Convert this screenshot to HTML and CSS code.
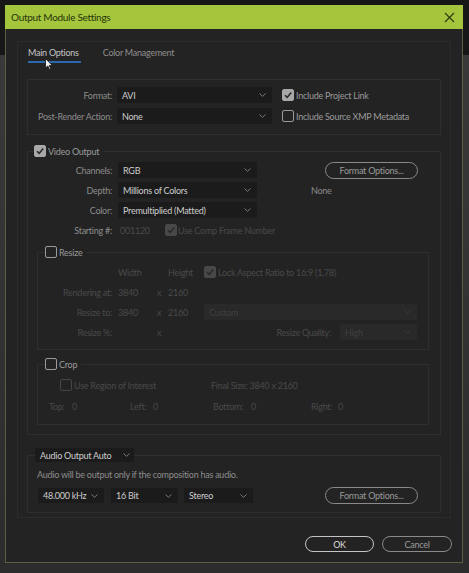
FILE: index.html
```html
<!DOCTYPE html>
<html lang="en">
<head>
    <meta charset="UTF-8">
    <title>Output Module Settings</title>
    <link rel="stylesheet" href="styles.css">
</head>
<body>
    <div class="window">
        <div class="titlebar">
            <span class="title">Output Module Settings</span>
            <svg class="close" width="11" height="11" viewBox="0 0 11 11"><path d="M1 1L10 10M10 1L1 10" stroke="#2f3d12" stroke-width="1.2"/></svg>
        </div>

        <div class="win-body">
            <div class="panel">
                <div class="tabs">
                    <span class="tab active">Main Options</span>
                    <span class="tab">Color Management</span>
                </div>

                <div class="group format-group">
                    <div class="format-row">
                        <span class="lbl">Format:</span>
                        <div class="select sel-format"><span>AVI</span><svg class="chev" width="7" height="4" viewBox="0 0 7 4"><path d="M0.5 0.5L3.5 3.3L6.5 0.5" fill="none" stroke="#7a7a7a"/></svg></div>
                        <span class="check on"><svg width="10" height="10" viewBox="0 0 10 10"><path d="M2 5.2L4.2 7.4L8.2 2.4" fill="none" stroke="#2a2a2a" stroke-width="1.6"/></svg></span>
                        <span class="check-text">Include Project Link</span>
                    </div>
                    <div class="format-row">
                        <span class="lbl">Post-Render Action:</span>
                        <div class="select sel-format"><span>None</span><svg class="chev" width="7" height="4" viewBox="0 0 7 4"><path d="M0.5 0.5L3.5 3.3L6.5 0.5" fill="none" stroke="#7a7a7a"/></svg></div>
                        <span class="check"></span>
                        <span class="check-text">Include Source XMP Metadata</span>
                    </div>
                </div>

                <fieldset class="video">
                    <legend class="legend"><span class="check on"><svg width="10" height="10" viewBox="0 0 10 10"><path d="M2 5.2L4.2 7.4L8.2 2.4" fill="none" stroke="#2a2a2a" stroke-width="1.6"/></svg></span><span class="check-text">Video Output</span></legend>

                    <div class="video-grid">
                        <span class="lbl">Channels:</span>
                        <div class="select"><span>RGB</span><svg class="chev" width="7" height="4" viewBox="0 0 7 4"><path d="M0.5 0.5L3.5 3.3L6.5 0.5" fill="none" stroke="#7a7a7a"/></svg></div>
                        <div><button class="pill fmt-btn">Format Options...</button></div>

                        <span class="lbl">Depth:</span>
                        <div class="select"><span>Millions of Colors</span><svg class="chev" width="7" height="4" viewBox="0 0 7 4"><path d="M0.5 0.5L3.5 3.3L6.5 0.5" fill="none" stroke="#7a7a7a"/></svg></div>
                        <span class="none-text">None</span>

                        <span class="lbl">Color:</span>
                        <div class="select"><span>Premultiplied (Matted)</span><svg class="chev" width="7" height="4" viewBox="0 0 7 4"><path d="M0.5 0.5L3.5 3.3L6.5 0.5" fill="none" stroke="#7a7a7a"/></svg></div>
                        <span></span>

                        <span class="lbl">Starting #:</span>
                        <div class="start-row">
                            <span class="dim start-num">001120</span>
                            <span class="check on dis"><svg width="10" height="10" viewBox="0 0 10 10"><path d="M2 5.2L4.2 7.4L8.2 2.4" fill="none" stroke="#2a2a2a" stroke-width="1.6"/></svg></span>
                            <span class="dim">Use Comp Frame Number</span>
                        </div>
                    </div>

                    <fieldset class="sub resize">
                        <legend class="legend"><span class="check"></span><span class="check-text">Resize</span></legend>
                        <div class="resize-grid">
                            <span></span><span class="dim">Width</span><span></span><span class="dim">Height</span>
                            <span class="lock"><span class="check on dis"><svg width="10" height="10" viewBox="0 0 10 10"><path d="M2 5.2L4.2 7.4L8.2 2.4" fill="none" stroke="#2a2a2a" stroke-width="1.6"/></svg></span><span class="dim">Lock Aspect Ratio to 16:9 (1.78)</span></span>

                            <span class="lbl dim">Rendering at:</span><span class="dim">3840</span><span class="dim">x</span><span class="dim">2160</span><span></span>

                            <span class="lbl dim">Resize to:</span><span class="dim">3840</span><span class="dim">x</span><span class="dim">2160</span>
                            <div class="select dis-sel"><span>Custom</span><svg class="chev" width="7" height="4" viewBox="0 0 7 4"><path d="M0.5 0.5L3.5 3.3L6.5 0.5" fill="none" stroke="#3c3c3c"/></svg></div>

                            <span class="lbl dim">Resize %:</span><span></span><span class="dim">x</span><span></span>
                            <div class="quality">
                                <span class="dim">Resize Quality:</span>
                                <div class="select dis-sel sel-quality"><span>High</span><svg class="chev" width="7" height="4" viewBox="0 0 7 4"><path d="M0.5 0.5L3.5 3.3L6.5 0.5" fill="none" stroke="#3c3c3c"/></svg></div>
                            </div>
                        </div>
                    </fieldset>

                    <fieldset class="sub crop">
                        <legend class="legend"><span class="check"></span><span class="check-text">Crop</span></legend>
                        <div class="roi-row">
                            <span class="roi"><span class="check dis-empty"></span><span class="dim">Use Region of Interest</span></span>
                            <span class="dim">Final Size: 3840 x 2160</span>
                        </div>
                        <div class="offset-row">
                            <span class="dim c-top">Top:</span><span class="dim c-val">0</span>
                            <span class="dim c-left">Left:</span><span class="dim c-val2">0</span>
                            <span class="dim c-bottom">Bottom:</span><span class="dim c-val2">0</span>
                            <span class="dim c-right">Right:</span><span class="dim">0</span>
                        </div>
                    </fieldset>
                </fieldset>

                <fieldset class="audio">
                    <legend class="legend audio-legend">
                        <div class="select sel-audio"><span>Audio Output Auto</span><svg class="chev" width="7" height="4" viewBox="0 0 7 4"><path d="M0.5 0.5L3.5 3.3L6.5 0.5" fill="none" stroke="#7a7a7a"/></svg></div>
                    </legend>
                    <div class="audio-note">Audio will be output only if the composition has audio.</div>
                    <div class="audio-row">
                        <div class="select sel-rate"><span>48.000 kHz</span><svg class="chev" width="7" height="4" viewBox="0 0 7 4"><path d="M0.5 0.5L3.5 3.3L6.5 0.5" fill="none" stroke="#7a7a7a"/></svg></div>
                        <div class="select sel-bit"><span>16 Bit</span><svg class="chev" width="7" height="4" viewBox="0 0 7 4"><path d="M0.5 0.5L3.5 3.3L6.5 0.5" fill="none" stroke="#7a7a7a"/></svg></div>
                        <div class="select sel-ch"><span>Stereo</span><svg class="chev" width="7" height="4" viewBox="0 0 7 4"><path d="M0.5 0.5L3.5 3.3L6.5 0.5" fill="none" stroke="#7a7a7a"/></svg></div>
                        <button class="pill fmt-btn audio-btn">Format Options...</button>
                    </div>
                </fieldset>
            </div>

            <div class="actions">
                <button class="pill ok-btn">OK</button>
                <button class="pill cancel-btn">Cancel</button>
            </div>
        </div>
    </div>

    <!-- mouse pointer over the first tab -->
    <svg class="cursor" width="8" height="12" viewBox="0 0 8 12"><path d="M0.5 0.5L0.5 10L2.8 8L4.5 11.5L5.8 10.9L4.2 7.5L7.3 7.5Z" fill="#f2f2f2" stroke="#111" stroke-width="0.8"/></svg>
</body>
</html>
```

FILE: styles.css
```css
  body {
      margin: 0;
      width: 469px;
      height: 573px;
      overflow: hidden;
      font-family: Lato, "Open Sans", sans-serif;
      font-size: 9px;
      letter-spacing: -0.25px;
      color: #8c8c8c;
      background: linear-gradient(to bottom, #171717 0, #171717 55px, #393939 55px, #2c2c2c 100%);
      position: relative;
  }
  .window {
      margin: 5px 0 0 5px;
      width: 458px;
  }
  .titlebar {
      height: 24px;
      background-color: #a5c53c;
      display: flex;
      align-items: center;
      justify-content: space-between;
      padding: 0 8px 0 6px;
  }
  .title {
      font-size: 10px;
      letter-spacing: -0.3px;
      color: #27340c;
  }
  .close {
      display: block;
  }
  .win-body {
      height: 534px;
      box-sizing: border-box;
      background-color: #232323;
      border: 1px solid #5d5d44;
      border-top: none;
      padding: 12px 10px 0 11px;
  }
  .panel {
      width: 434px;
      box-sizing: border-box;
      border: 1px solid #2c2c2c;
      padding: 0 9px 4px 9px;
  }

  /* tabs */
  .tabs {
      display: flex;
      gap: 22px;
      padding: 5px 0 0 1px;
  }
  .tab {
      line-height: 12px;
      padding-bottom: 2px;
      border-bottom: 2px solid transparent;
      color: #8e8e8e;
  }
  .tab.active {
      color: #c4c4c4;
      border-bottom-color: #2b69ad;
      padding-right: 2px;
  }

  .group {
      border: 1px solid #2e2e2e;
  }
  .format-group {
      margin-top: 16px;
      padding: 7px 0 10px 0;
      display: flex;
      flex-direction: column;
      gap: 5px;
  }
  .format-row {
      display: flex;
      align-items: center;
      height: 16px;
  }
  .lbl {
      width: 84px;
      text-align: right;
      flex-shrink: 0;
  }
  .format-row .lbl {
      margin-right: 5px;
  }

  .select {
      height: 16px;
      box-sizing: border-box;
      background-color: #1b1b1b;
      color: #cdcdcd;
      display: flex;
      align-items: center;
      justify-content: space-between;
      padding: 0 6px 0 5px;
      white-space: nowrap;
  }
  .sel-format {
      width: 155px;
      margin-right: 10px;
  }
  .chev {
      display: block;
      flex-shrink: 0;
  }

  .check {
      width: 12px;
      height: 12px;
      box-sizing: border-box;
      border: 1px solid #9a9a9a;
      border-radius: 2px;
      display: inline-flex;
      align-items: center;
      justify-content: center;
      flex-shrink: 0;
  }
  .check.on {
      background-color: #a8a8a8;
      border-color: #a8a8a8;
  }
  .check.dis {
      background-color: #484848;
      border-color: #484848;
  }
  .check.dis-empty {
      border-color: #454545;
  }
  .check-text {
      margin-left: 2px;
      color: #9a9a9a;
  }

  fieldset {
      margin: 0;
      padding: 0;
      border: 1px solid #2e2e2e;
      min-width: 0;
  }
  .legend {
      padding: 0 4px 0 0;
      display: flex;
      align-items: center;
      height: 12px;
  }
  .video {
      margin-top: 10px;
      padding-bottom: 9px;
  }
  .video > .legend {
      margin-left: 6px;
  }
  .video-grid {
      display: grid;
      grid-template-columns: 84px 139px 1fr;
      column-gap: 6px;
      row-gap: 4px;
      grid-auto-rows: 16px;
      align-items: center;
      padding-top: 5px;
  }
  .fmt-btn {
      margin-left: 62px;
  }
  .none-text {
      margin-left: 48px;
  }
  .start-row {
      grid-column: 2 / 4;
      display: flex;
      align-items: center;
  }
  .start-num {
      width: 45px;
      padding-left: 1px;
  }
  .start-row .dim {
      margin-left: 1px;
  }
  .dim {
      color: #4a4a4a;
  }

  .pill {
      font-family: inherit;
      font-size: 9px;
      letter-spacing: -0.25px;
      height: 17px;
      width: 93px;
      box-sizing: border-box;
      border: 1.5px solid #8a8a8a;
      border-radius: 9px;
      background: transparent;
      color: #9a9a9a;
      padding: 0;
  }

  .sub {
      margin: 8px 11px 0 9px;
  }
  .sub > .legend {
      margin-left: 7px;
  }
  .resize {
      padding: 6px 11px 9px 0;
  }
  .resize-grid {
      display: grid;
      grid-template-columns: 80px 39px 11px 36px 1fr;
      grid-auto-rows: 16px;
      row-gap: 4px;
      align-items: center;
  }
  .resize-grid .lbl {
      width: auto;
      padding-right: 6px;
  }
  .lock {
      display: flex;
      align-items: center;
      gap: 2px;
  }
  .dis-sel {
      background-color: #292929;
      color: #404040;
  }
  .quality {
      display: flex;
      align-items: center;
      justify-content: flex-end;
      gap: 9px;
  }
  .sel-quality {
      width: 77px;
  }

  .crop {
      padding: 9px 0 12px 0;
  }
  .roi-row {
      display: flex;
      align-items: center;
      height: 12px;
      padding-left: 22px;
  }
  .roi {
      width: 151px;
      display: flex;
      align-items: center;
      gap: 2px;
  }
  .offset-row {
      display: flex;
      align-items: center;
      height: 12px;
      margin-top: 9px;
      padding-left: 11px;
  }
  .c-top, .c-left { width: 23px; }
  .c-val { width: 58px; }
  .c-val2 { width: 60px; }
  .c-bottom { width: 38px; }
  .c-right { width: 27px; }

  .audio {
      margin-top: 13px;
      padding: 7px 0 8px 0;
  }
  .audio-legend {
      margin-left: 7px;
      height: 14px;
      padding: 0;
  }
  .sel-audio {
      width: 99px;
      height: 14px;
      padding-right: 4px;
  }
  .audio-note {
      line-height: 12px;
      padding-left: 9px;
  }
  .audio-row {
      display: flex;
      align-items: center;
      margin-top: 6px;
      padding-left: 10px;
  }
  .audio-row .select {
      height: 15px;
  }
  .sel-rate { width: 66px; margin-right: 7px; }
  .sel-bit { width: 67px; margin-right: 6px; }
  .sel-ch { width: 69px; }
  .audio-btn {
      margin-left: 72px;
  }

  .actions {
      display: flex;
      justify-content: flex-end;
      gap: 8px;
      margin-top: 18px;
  }
  .ok-btn {
      width: 69px;
      height: 16px;
      border-color: #c4c4c4;
      color: #dcdcdc;
  }
  .cancel-btn {
      width: 70px;
      height: 16px;
  }

  .cursor {
      position: absolute;
      left: 45px;
      top: 58px;
  }
```
